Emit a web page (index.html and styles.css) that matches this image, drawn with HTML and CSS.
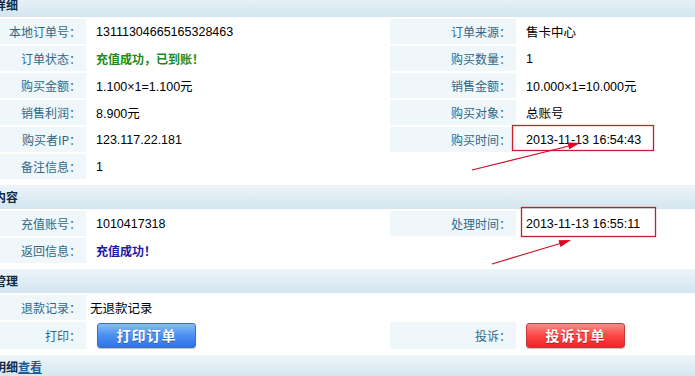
FILE: index.html
```html
<!DOCTYPE html>
<html lang="zh-CN">
<head>
    <meta charset="UTF-8">
    <title>订单详细</title>
    <link rel="stylesheet" href="styles.css">
</head>
<body>
    <div class="page">
        <div class="section">
            <div class="section-title">订单详细</div>
            <table class="info">
                <colgroup><col class="c-label"><col class="c-value"><col class="c-label"><col class="c-value"></colgroup>
                <tr>
                    <th>本地订单号：</th><td>13111304665165328463</td>
                    <th>订单来源：</th><td>售卡中心</td>
                </tr>
                <tr>
                    <th>订单状态：</th><td><span class="ok">充值成功，已到账！</span></td>
                    <th>购买数量：</th><td>1</td>
                </tr>
                <tr>
                    <th>购买金额：</th><td>1.100×1=1.100元</td>
                    <th>销售金额：</th><td>10.000×1=10.000元</td>
                </tr>
                <tr>
                    <th>销售利润：</th><td>8.900元</td>
                    <th>购买对象：</th><td>总账号</td>
                </tr>
                <tr>
                    <th>购买者IP：</th><td>123.117.22.181</td>
                    <th>购买时间：</th><td>2013-11-13 16:54:43</td>
                </tr>
                <tr>
                    <th>备注信息：</th><td colspan="3">1</td>
                </tr>
            </table>
        </div>

        <div class="section">
            <div class="section-title">充值内容</div>
            <table class="info">
                <colgroup><col class="c-label"><col class="c-value"><col class="c-label"><col class="c-value"></colgroup>
                <tr>
                    <th>充值账号：</th><td>1010417318</td>
                    <th>处理时间：</th><td>2013-11-13 16:55:11</td>
                </tr>
                <tr>
                    <th>返回信息：</th><td colspan="3"><span class="done">充值成功！</span></td>
                </tr>
            </table>
        </div>

        <div class="section">
            <div class="section-title">售后管理</div>
            <table class="info">
                <colgroup><col class="c-label"><col class="c-value"><col class="c-label"><col class="c-value"></colgroup>
                <tr>
                    <th>退款记录：</th><td colspan="3" class="tight">无退款记录</td>
                </tr>
                <tr class="btn-row">
                    <th>打印：</th><td><a class="btn btn-blue" href="#">打印订单</a></td>
                    <th>投诉：</th><td><a class="btn btn-red" href="#">投诉订单</a></td>
                </tr>
            </table>
        </div>

        <div class="section">
            <div class="section-title">订单明细<a href="#">查看</a></div>
        </div>
    </div>

    <svg class="marks" width="695" height="376" viewBox="0 0 695 376">
        <rect x="512.5" y="125.5" width="141" height="25" fill="none" stroke="#c4202c" stroke-width="1.3"/>
        <rect x="521.5" y="207.5" width="134" height="29" fill="none" stroke="#c4202c" stroke-width="1.3"/>
        <line x1="472" y1="170" x2="569" y2="146" stroke="#c8102a" stroke-width="1.1"/>
        <polygon points="580,143 569.2,149.3 567.6,142.5" fill="#e00020"/>
        <line x1="492" y1="264" x2="560" y2="243.5" stroke="#c8102a" stroke-width="1.1"/>
        <polygon points="571,240 560.5,246.9 558.5,240.2" fill="#e00020"/>
    </svg>
</body>
</html>
```

FILE: styles.css
```css
html, body {
    margin: 0;
    padding: 0;
    overflow: hidden;
    background: #fff;
}
body {
    position: relative;
    font-family: "Liberation Sans", "Noto Sans CJK SC", sans-serif;
    font-size: 12.5px;
    color: #000;
}
.page {
    width: 862px;
    margin: -7px 0 0 -42px;
}
.section {
    margin-bottom: 4px;
}
.section-title {
    height: 24px;
    line-height: 24px;
    padding-left: 12px;
    background: linear-gradient(#eef5f9, #d2e5ef);
    font-family: "Noto Sans CJK SC", sans-serif;
    font-size: 12px;
    font-weight: bold;
    color: #0f2a45;
}
.section-title a {
    color: #1b5a9c;
    text-decoration: underline;
}
.info {
    width: 862px;
    table-layout: fixed;
    border-collapse: separate;
    border-spacing: 2px;
}
.c-label {
    width: 126px;
}
.c-value {
    width: 300px;
}
.info th,
.info td {
    height: 25px;
    padding: 0;
    white-space: nowrap;
}
.info th {
    background: #f0f7fb;
    text-align: right;
    padding-right: 5px;
    font-family: "Noto Sans CJK SC", sans-serif;
    font-size: 12px;
    font-weight: normal;
    color: #2f6788;
}
.info td {
    padding-left: 8px;
}
.info td.tight {
    padding-left: 2px;
}
.info .btn-row th,
.info .btn-row td {
    height: 27px;
}
.ok {
    font-family: "Noto Sans CJK SC", sans-serif;
    font-size: 12px;
    font-weight: bold;
    color: #1c8a1c;
}
.done {
    font-family: "Noto Sans CJK SC", sans-serif;
    font-size: 12px;
    font-weight: bold;
    color: #1a1aa6;
}
.btn {
    display: block;
    width: 97px;
    height: 23px;
    line-height: 23px;
    margin-left: 1px;
    text-align: center;
    border-radius: 3px;
    font-family: "Noto Sans CJK SC", sans-serif;
    font-size: 14px;
    font-weight: bold;
    letter-spacing: 1px;
    color: #fff;
    text-decoration: none;
    box-shadow: 0 1px 1px rgba(0,0,0,0.25);
}
.btn-blue {
    border: 1px solid #3a72c8;
    background: linear-gradient(#86bcf8, #4b90f0 50%, #2f74e4);
    text-shadow: 0 1px 0 #2a5fae;
}
.btn-red {
    margin-left: 0;
    border: 1px solid #c23a3a;
    background: linear-gradient(#ff8a8a, #fb4747 50%, #ee2525);
    text-shadow: 0 1px 0 #a81c1c;
}
.marks {
    position: absolute;
    left: 0;
    top: 0;
    pointer-events: none;
}
```
